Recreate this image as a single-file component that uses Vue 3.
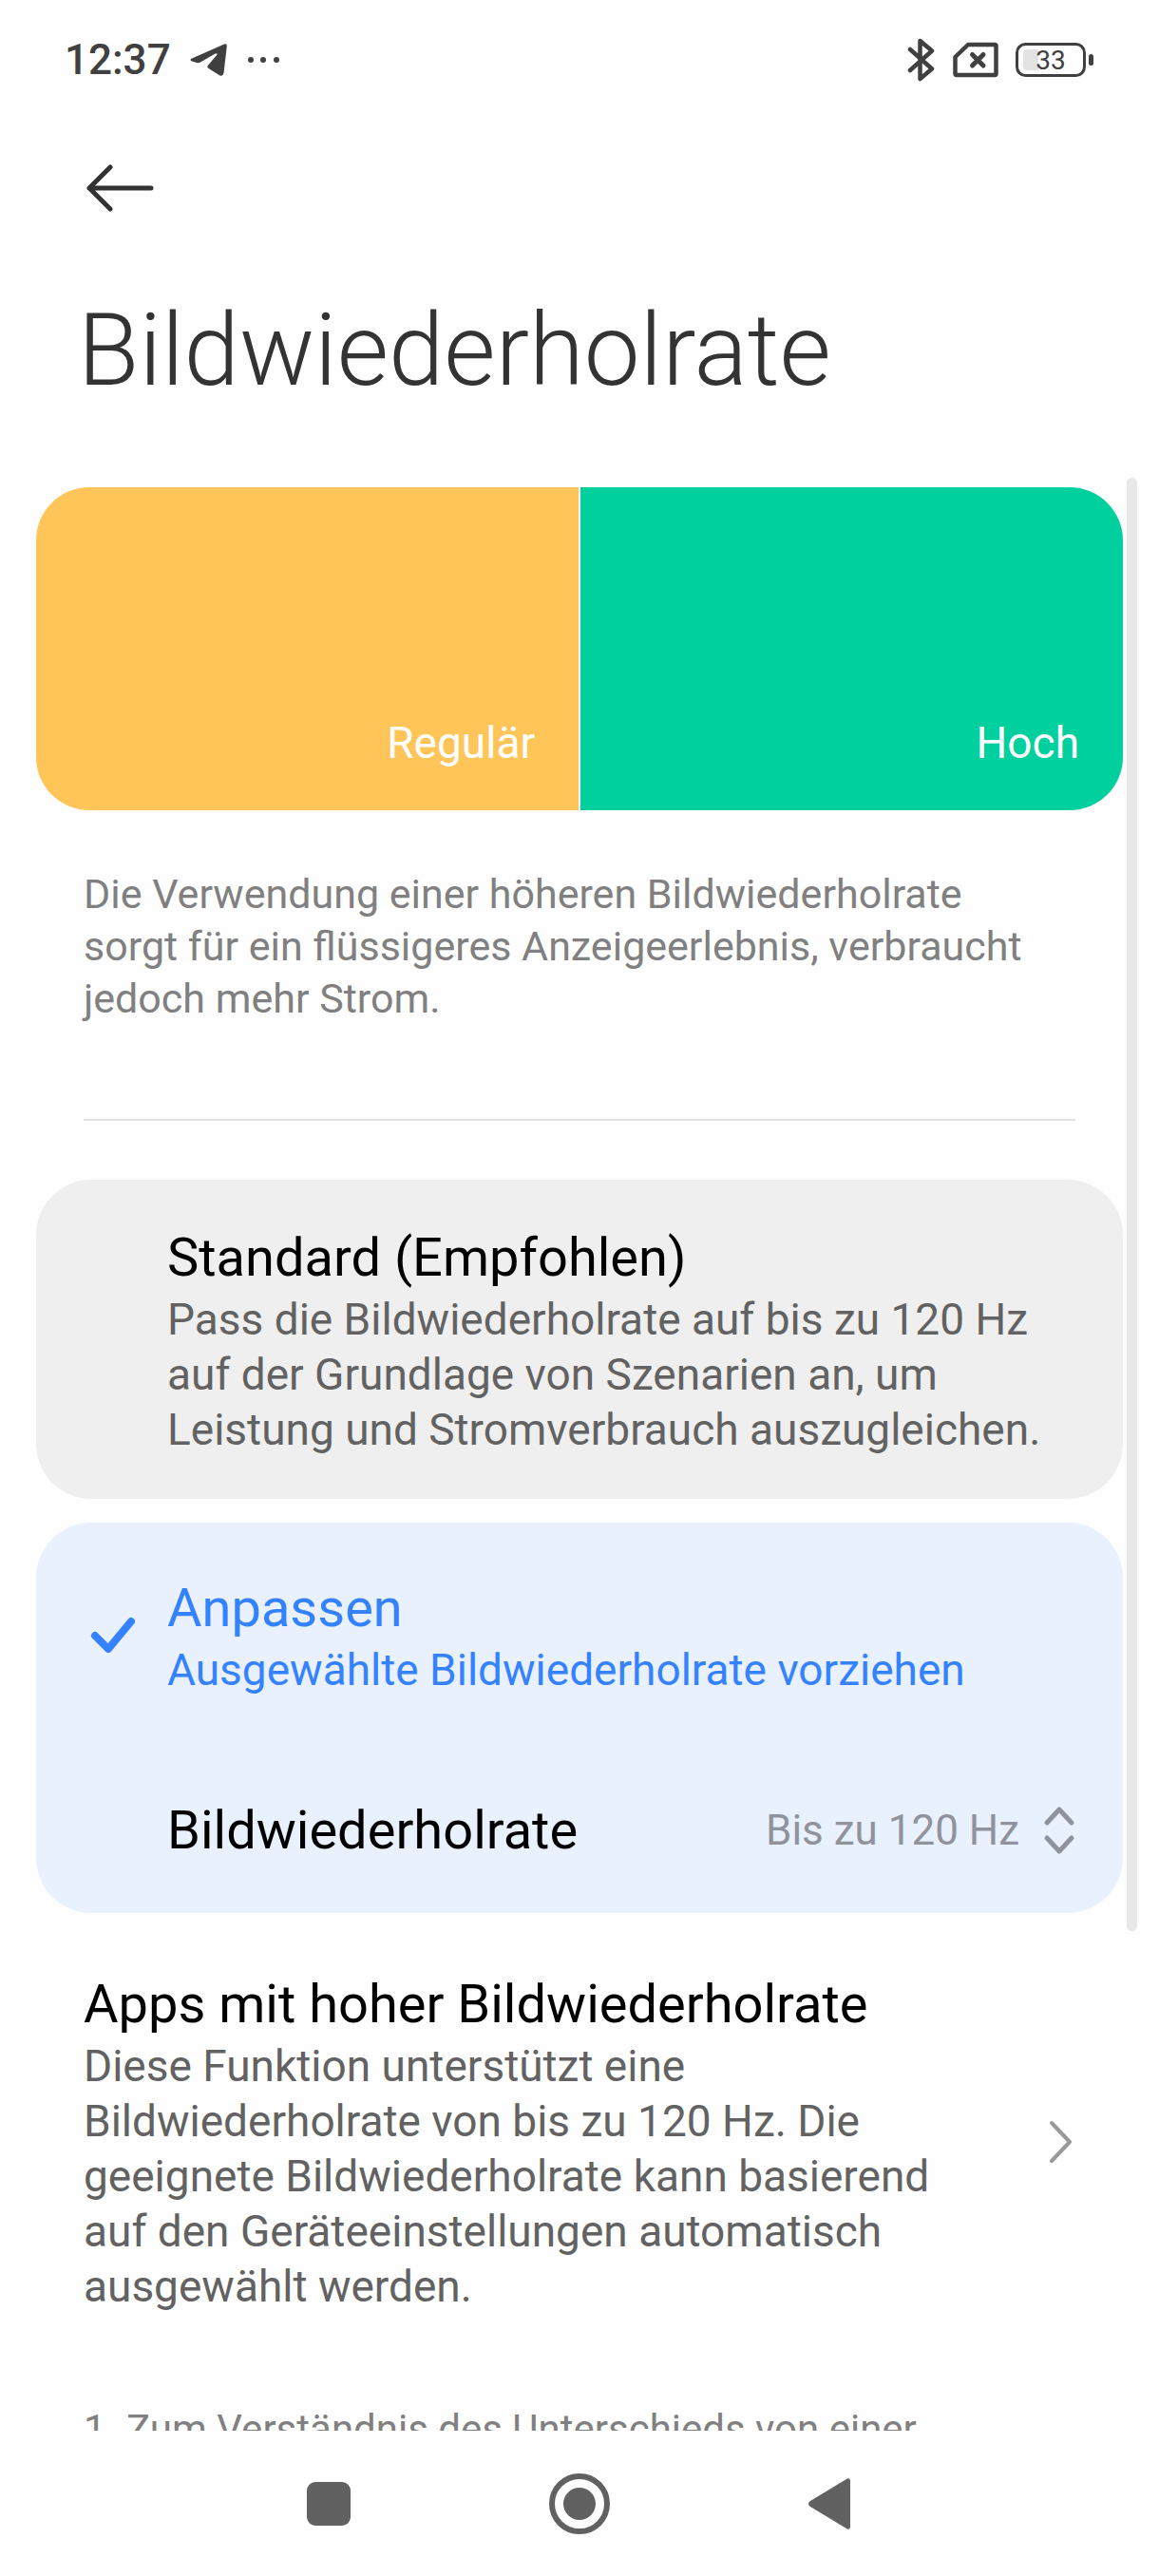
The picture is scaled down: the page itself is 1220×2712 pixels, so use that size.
<script setup>
import { ref } from 'vue'

const mode = ref('custom')
const rate = ref('120')
</script>

<template>
  <div class="screen">
    <header class="status">
      <div class="status-side">
        <time class="clock">12:37</time>
        <svg width="40" height="36" viewBox="0 0 40 36" aria-hidden="true">
          <path d="M2 16.500 36 1.500Q39 .5 38.800 3.500L35.500 32Q34.500 36 31 34.300L19.500 27Q17.500 25.500 19 23.700L28.500 12.500Q29 10.500 26.500 11.500L11 20.500Q9 21.600 7 21L2 19.500Q-1 18 2 16.500Z" fill="#404040" />
        </svg>
        <svg width="36" height="8" viewBox="0 0 36 8" fill="#404040" aria-hidden="true">
          <circle cx="4" cy="4" r="3" /><circle cx="17" cy="4" r="3" /><circle cx="31" cy="4" r="3" />
        </svg>
      </div>
      <div class="status-side status-right">
        <svg width="30" height="46" viewBox="0 0 30 46" fill="none" stroke="#404040" stroke-width="4.500" stroke-linecap="round" stroke-linejoin="round" aria-hidden="true">
          <path d="M3 12 26 32.500 13.500 43V3L26 13.500 3 34" />
        </svg>
        <svg width="48" height="38" viewBox="0 0 48 38" fill="none" stroke="#404040" stroke-linecap="round" stroke-linejoin="round" aria-hidden="true">
          <path d="M16 3H44Q45.500 3 45.500 4.500V33.500Q45.500 35 44 35H4Q2.500 35 2.500 33.500V16Z" stroke-width="4.500" />
          <path d="M20.500 13.500 32 25M32 13.500 20.500 25" stroke-width="5" />
        </svg>
        <svg width="82" height="36" viewBox="0 0 82 36" aria-hidden="true">
          <path d="M12 7H24V29H12Q8 29 8 25V11Q8 7 12 7Z" fill="#e3e3e3" />
          <rect x="1.500" y="1.500" width="71" height="33" rx="9" fill="none" stroke="#404040" stroke-width="3" />
          <rect x="77" y="12" width="5" height="12" rx="2.500" fill="#404040" />
          <text x="37" y="28" text-anchor="middle" class="battery-text">33</text>
        </svg>
      </div>
    </header>

    <div class="toolbar">
      <button class="back" type="button" aria-label="Zurück">
        <svg width="72" height="50" viewBox="0 0 72 50" fill="none" stroke="#333" stroke-width="5" stroke-linecap="round" stroke-linejoin="round">
          <path d="M26 3 4 25 26 47M4 25H69" />
        </svg>
      </button>
    </div>

    <h1 class="title">Bildwiederholrate</h1>

    <main class="content">
      <div class="thumb"></div>
      <div class="scroll">
        <div class="preview">
          <div class="pane regular">Regulär</div>
          <div class="pane high">Hoch</div>
        </div>

        <p class="note">Die Verwendung einer höheren Bildwiederholrate sorgt für ein flüssigeres Anzeigeerlebnis, verbraucht jedoch mehr Strom.</p>
        <hr class="rule" />

        <div class="cards">
          <section class="card" :class="{ active: mode === 'standard' }">
            <label class="option">
              <span class="tick">
                <input v-model="mode" type="radio" name="mode" value="standard" />
                <svg v-if="mode === 'standard'" width="48" height="40" viewBox="0 0 48 40"><path d="M6 20 20 34 44 5" /></svg>
              </span>
              <span class="words">
                <span class="heading">Standard (Empfohlen)</span>
                <span class="detail">Pass die Bildwiederholrate auf bis zu 120 Hz auf der Grundlage von Szenarien an, um Leistung und Stromverbrauch auszugleichen.</span>
              </span>
            </label>
          </section>

          <section class="card" :class="{ active: mode === 'custom' }">
            <label class="option">
              <span class="tick">
                <input v-model="mode" type="radio" name="mode" value="custom" />
                <svg v-if="mode === 'custom'" width="48" height="40" viewBox="0 0 48 40"><path d="M6 20 20 34 44 5" /></svg>
              </span>
              <span class="words">
                <span class="heading">Anpassen</span>
                <span class="detail">Ausgewählte Bildwiederholrate vorziehen</span>
              </span>
            </label>
            <div class="rate">
              <label class="rate-label" for="rate">Bildwiederholrate</label>
              <span class="rate-value">
                <select id="rate" v-model="rate">
                  <option value="60">Bis zu 60 Hz</option>
                  <option value="120">Bis zu 120 Hz</option>
                </select>
                <svg width="34" height="52" viewBox="0 0 34 52" fill="none" stroke="#90939b" stroke-width="5" stroke-linecap="round" stroke-linejoin="round" aria-hidden="true">
                  <path d="M4 18 17 4 30 18M4 34 17 48 30 34" />
                </svg>
              </span>
            </div>
          </section>
        </div>

        <a class="apps" href="#apps">
          <span class="words">
            <span class="heading">Apps mit hoher Bildwiederholrate</span>
            <span class="detail">Diese Funktion unterstützt eine Bildwiederholrate von bis zu 120 Hz. Die geeignete Bildwiederholrate kann basierend auf den Geräteeinstellungen automatisch ausgewählt werden.</span>
          </span>
          <svg width="28" height="46" viewBox="0 0 28 46" fill="none" stroke="#999" stroke-width="4" stroke-linecap="round" stroke-linejoin="round" aria-hidden="true">
            <path d="M3 3 22 23 3 43" />
          </svg>
        </a>

        <p class="note footnote">1. Zum Verständnis des Unterschieds von einer</p>
      </div>
    </main>

    <nav class="navbar">
      <button type="button" aria-label="Übersicht">
        <svg width="64" height="64" viewBox="0 0 64 64"><rect x="9" y="9" width="46" height="46" rx="9" /></svg>
      </button>
      <button type="button" aria-label="Startseite">
        <svg width="64" height="64" viewBox="0 0 64 64"><circle cx="32" cy="32" r="29" fill="none" stroke="#616161" stroke-width="6" /><circle cx="32" cy="32" r="17" /></svg>
      </button>
      <button type="button" aria-label="Zurück">
        <svg width="64" height="64" viewBox="0 0 64 64"><path d="M11 29 49 6Q53 4 53 8V56Q53 60 49 58L11 35Q7 32 11 29Z" /></svg>
      </button>
    </nav>
  </div>
</template>

<style>
body {
  background: #fefefe;
}
</style>

<style scoped>
.screen {
  display: flex;
  flex-direction: column;
  height: 100vh;
  box-sizing: border-box;
  overflow: hidden;
  background: #fefefe;
  font-family: Roboto, "Noto Sans", sans-serif;
  color: #000;
}

button,
select {
  border: 0;
  background: none;
  font: inherit;
  color: inherit;
}

svg {
  display: block;
  flex: none;
}

.status {
  display: flex;
  justify-content: space-between;
  align-items: center;
  height: 126px;
  padding: 0 69px 0 68px;
  color: #404040;
}

.status-side {
  display: flex;
  align-items: center;
  gap: 20px;
}

.status-right {
  gap: 18px;
}

.clock {
  font-size: 44px;
  line-height: 56px;
  font-weight: 500;
}

.battery-text {
  font-size: 28px;
  fill: #404040;
}

.toolbar {
  display: flex;
  align-items: center;
  height: 144px;
  padding: 0 90px;
}

.back {
  padding: 0;
}

.title {
  margin: 0;
  padding: 36px 82px 69px;
  font-size: 105px;
  line-height: 128px;
  font-weight: 300;
  color: #333;
}

.content {
  position: relative;
  flex: 1;
  min-height: 0;
  overflow: hidden;
}

.thumb {
  position: absolute;
  top: 0;
  right: 23px;
  width: 11px;
  height: 74.4%;
  border-radius: 6px;
  background: #e8e8e8;
}

.scroll {
  padding: 10px 38px 0;
}

.preview {
  display: flex;
  gap: 2px;
  height: 340px;
  border-radius: 56px;
  overflow: hidden;
}

.pane {
  display: flex;
  flex: 1;
  justify-content: flex-end;
  align-items: flex-end;
  padding: 0 46px 42px;
  font-size: 46px;
  line-height: 58px;
  color: #fff;
}

.regular {
  background: #ffc558;
}

.high {
  background: #00d09e;
}

.note {
  margin: 0;
  padding: 61px 80px 0 50px;
  font-size: 43px;
  line-height: 55px;
  color: #808080;
}

.rule {
  height: 2px;
  margin: 99px 50px 62px;
  border: 0;
  background: #e3e3e3;
}

.cards {
  display: flex;
  flex-direction: column;
  gap: 25px;
}

.card {
  border-radius: 58px;
  background: #efefef;
}

.card.active {
  background: #e9f1ff;
}

.option {
  display: flex;
  align-items: center;
  min-height: 236px;
  padding: 46px 50px 44px;
  box-sizing: border-box;
}

.tick {
  position: relative;
  flex: none;
  width: 88px;
  padding-left: 6px;
  box-sizing: border-box;
}

.tick input {
  position: absolute;
  inset: 0;
  margin: 0;
  appearance: none;
}

.tick path {
  fill: none;
  stroke: #3482ff;
  stroke-width: 8;
  stroke-linecap: round;
  stroke-linejoin: round;
}

.words {
  flex: 1;
}

.heading,
.detail {
  display: block;
}

.heading,
.rate-label {
  font-size: 56px;
  line-height: 72px;
}

.detail {
  font-size: 46px;
  line-height: 58px;
  color: #626262;
}

.active .option .heading,
.active .option .detail {
  color: #3482ff;
}

.rate {
  display: flex;
  justify-content: space-between;
  align-items: center;
  padding: 52px 50px 51px 138px;
}

.rate-value {
  display: flex;
  align-items: center;
  gap: 24px;
  color: #90939b;
}

.rate-value select {
  padding: 0;
  appearance: none;
  font-size: 44px;
  line-height: 58px;
}

.apps {
  display: flex;
  align-items: center;
  padding: 60px 50px 0;
  color: inherit;
  text-decoration: none;
}

.apps .words {
  padding-right: 110px;
}

.footnote {
  padding-top: 94px;
  font-size: 42px;
}

.navbar {
  display: flex;
  justify-content: center;
  gap: 200px;
  padding: 45px 0 44px;
  background: #fefefe;
}

.navbar button {
  padding: 0;
}

.navbar svg {
  fill: #616161;
}
</style>
